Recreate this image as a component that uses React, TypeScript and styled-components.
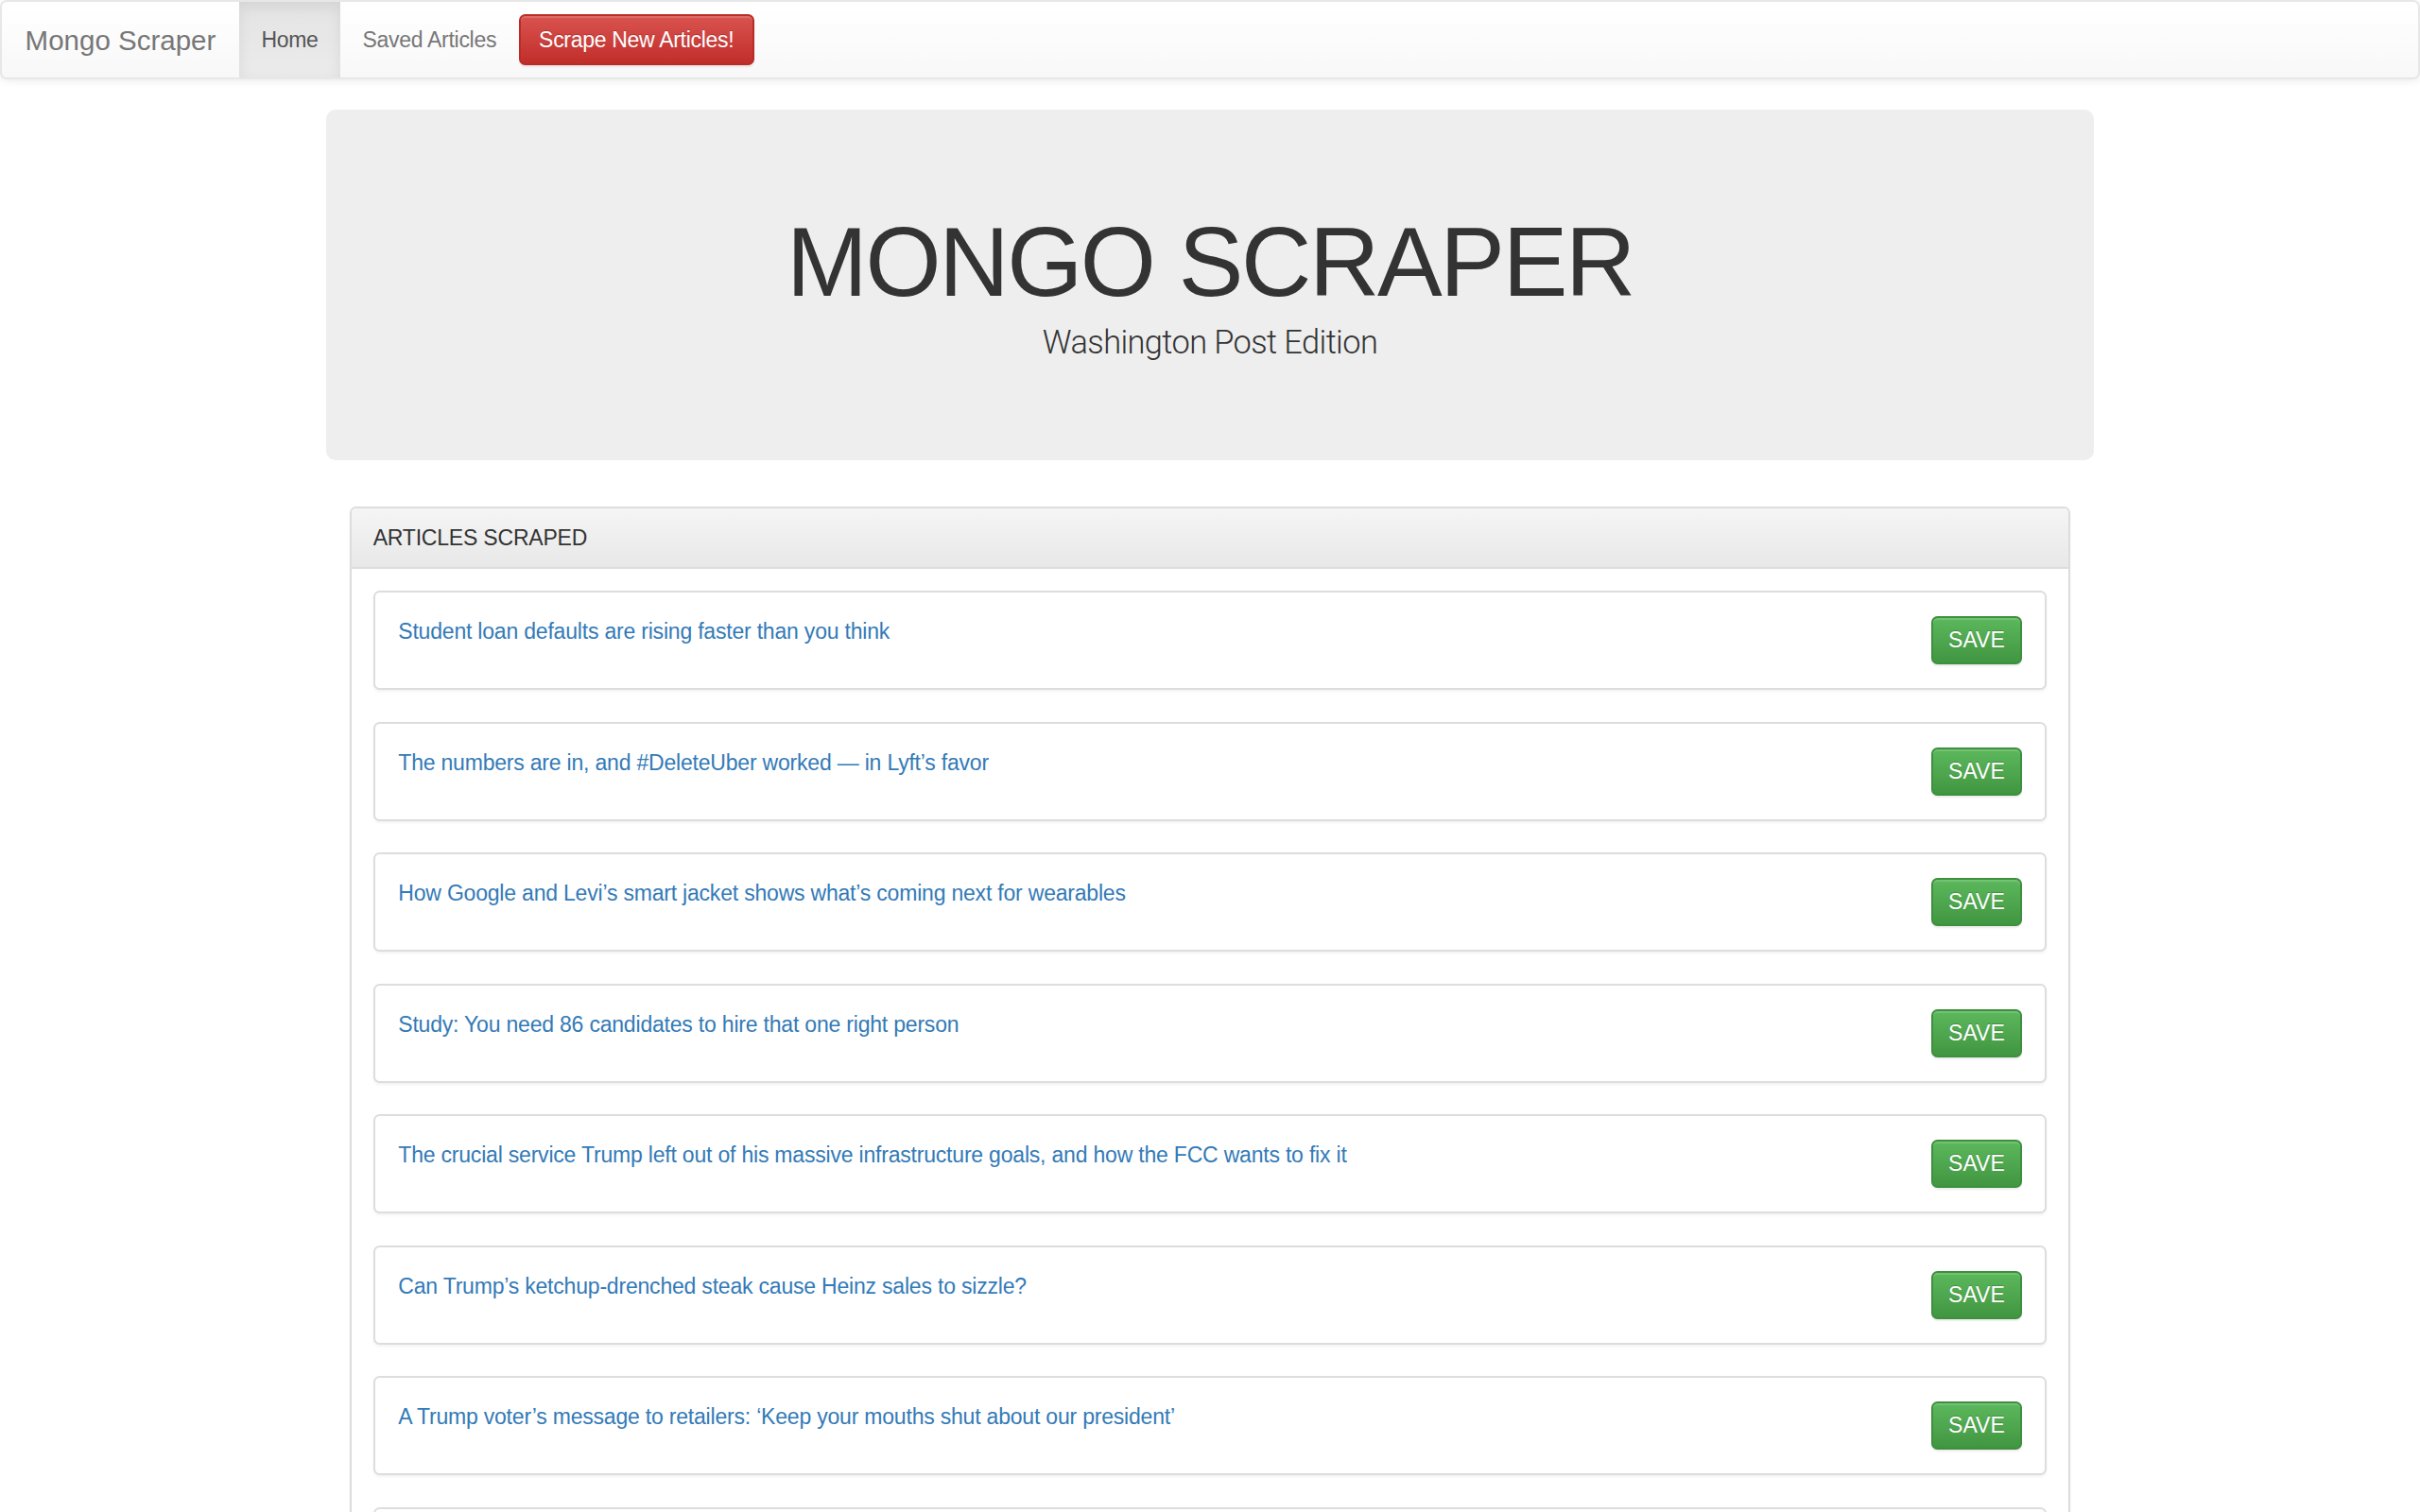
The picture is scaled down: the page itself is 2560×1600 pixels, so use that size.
import React from "react";
import styled, { createGlobalStyle } from "styled-components";

const GlobalStyle = createGlobalStyle`
  html { scrollbar-width: none; }
  html::-webkit-scrollbar { display: none; }
  * { box-sizing: border-box; }
  body {
    margin: 0;
    background: #fff;
    color: #333;
    font-family: "Liberation Sans", Helvetica, Arial, sans-serif;
    font-size: 23px;
    line-height: 33px;
  }
`;

const Navbar = styled.nav`
  display: flex;
  align-items: stretch;
  height: 84px;
  margin-bottom: 32px;
  border: 2px solid #e7e7e7;
  border-radius: 7px;
  background-image: linear-gradient(to bottom, #ffffff 0%, #f8f8f8 100%);
  box-shadow: inset 0 2px 0 rgba(255, 255, 255, 0.15), 0 2px 8px rgba(0, 0, 0, 0.075);
`;

const Brand = styled.a`
  display: flex;
  align-items: center;
  padding: 0 24.6px;
  font-size: 29.5px;
  color: #777;
  text-decoration: none;
`;

const NavLink = styled.a<{ $active?: boolean }>`
  display: flex;
  align-items: center;
  padding: 0 23.5px;
  letter-spacing: -0.3px;
  color: ${(p) => (p.$active ? "#555" : "#777")};
  text-decoration: none;
  background-image: ${(p) =>
    p.$active ? "linear-gradient(to bottom, #e4e4e4 0%, #ebebeb 100%)" : "none"};
  box-shadow: ${(p) => (p.$active ? "inset 0 5px 15px rgba(0, 0, 0, 0.075)" : "none")};
`;

const ScrapeButton = styled.button`
  align-self: center;
  padding: 8.5px 19.5px;
  font-family: inherit;
  font-size: 23px;
  line-height: 33px;
  letter-spacing: -0.3px;
  color: #fff;
  border: 2px solid #b92c28;
  border-radius: 6.5px;
  background-image: linear-gradient(to bottom, #d9534f 0%, #c12e2a 100%);
  text-shadow: 0 -1px 0 rgba(0, 0, 0, 0.2);
  box-shadow: inset 0 2px 0 rgba(255, 255, 255, 0.15), 0 2px 2px rgba(0, 0, 0, 0.075);
  cursor: pointer;
`;

const Container = styled.main`
  width: 1919px;
  margin: 0 auto;
  padding: 0 24.6px;
`;

const Jumbotron = styled.header`
  margin-bottom: 49px;
  padding: 78.7px 98.4px;
  background: #eee;
  border-radius: 10px;
  text-align: center;
`;

const Title = styled.h1`
  margin: 26px 0 4px;
  font-size: 103px;
  line-height: 113px;
  font-weight: 400;
  letter-spacing: -2.4px;
  color: #333;
`;

const Subtitle = styled.p`
  margin: 0 0 22px;
  font-family: Roboto, "Liberation Sans", Arial, sans-serif;
  font-size: 34.4px;
  line-height: 49px;
  font-weight: 300;
  letter-spacing: -0.6px;
  color: #333;
`;

const Panel = styled.section`
  margin: 0 24.6px;
  background: #fff;
  border: 2px solid #ddd;
  border-radius: 6.5px;
  box-shadow: 0 2px 3px rgba(0, 0, 0, 0.05);
`;

const PanelHeading = styled.div`
  padding: 14.5px 23px;
  background-image: linear-gradient(to bottom, #f5f5f5 0%, #e8e8e8 100%);
  border-bottom: 2px solid #ddd;
  border-radius: 5px 5px 0 0;
  letter-spacing: -0.2px;
  color: #333;
`;

const PanelBody = styled.div`
  display: flex;
  flex-direction: column;
  gap: 33.5px;
  padding: 23px;
`;

const ArticleCard = styled.article`
  display: flex;
  justify-content: space-between;
  align-items: flex-start;
  padding: 25px 24.6px;
  background: #fff;
  border: 2px solid #ddd;
  border-radius: 6.5px;
  box-shadow: 0 2px 3px rgba(0, 0, 0, 0.05);
`;

const ArticleLink = styled.a`
  color: #337ab7;
  text-decoration: none;
  letter-spacing: -0.2px;
`;

const SaveButton = styled.button`
  flex-shrink: 0;
  padding: 7px 16px;
  font-family: inherit;
  font-size: 23px;
  line-height: 33px;
  color: #fff;
  border: 2px solid #3e8f3e;
  border-radius: 6.5px;
  background-image: linear-gradient(to bottom, #5cb85c 0%, #419641 100%);
  text-shadow: 0 -1px 0 rgba(0, 0, 0, 0.2);
  box-shadow: inset 0 2px 0 rgba(255, 255, 255, 0.15), 0 2px 2px rgba(0, 0, 0, 0.075);
  cursor: pointer;
`;

const articles = [
  "Student loan defaults are rising faster than you think",
  "The numbers are in, and #DeleteUber worked \u2014 in Lyft\u2019s favor",
  "How Google and Levi\u2019s smart jacket shows what\u2019s coming next for wearables",
  "Study: You need 86 candidates to hire that one right person",
  "The crucial service Trump left out of his massive infrastructure goals, and how the FCC wants to fix it",
  "Can Trump\u2019s ketchup-drenched steak cause Heinz sales to sizzle?",
  "A Trump voter\u2019s message to retailers: \u2018Keep your mouths shut about our president\u2019",
  "Why the stock market keeps shrugging off political drama",
];

export default function App() {
  return (
    <>
      <GlobalStyle />
      <Navbar>
        <Brand href="#">Mongo Scraper</Brand>
        <NavLink href="#" $active>
          Home
        </NavLink>
        <NavLink href="#">Saved Articles</NavLink>
        <ScrapeButton type="button">Scrape New Articles!</ScrapeButton>
      </Navbar>
      <Container>
        <Jumbotron>
          <Title>MONGO SCRAPER</Title>
          <Subtitle>Washington Post Edition</Subtitle>
        </Jumbotron>
        <Panel>
          <PanelHeading>ARTICLES SCRAPED</PanelHeading>
          <PanelBody>
            {articles.map((title) => (
              <ArticleCard key={title}>
                <ArticleLink href="#">{title}</ArticleLink>
                <SaveButton type="button">SAVE</SaveButton>
              </ArticleCard>
            ))}
          </PanelBody>
        </Panel>
      </Container>
    </>
  );
}
